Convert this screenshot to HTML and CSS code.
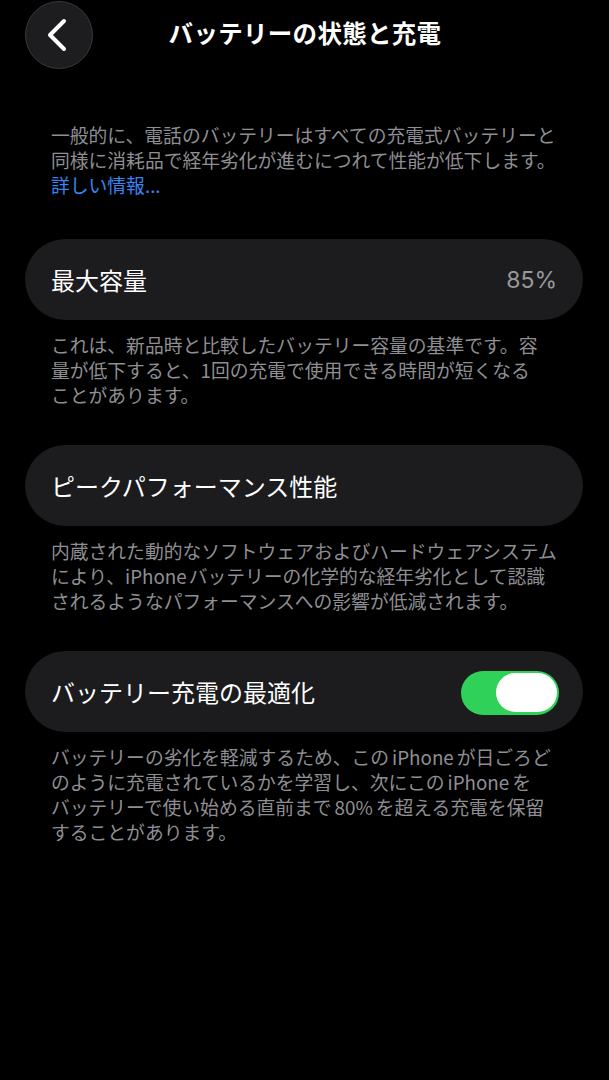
FILE: index.html
```html
<!DOCTYPE html>
<html lang="ja">
<head>
<meta charset="utf-8">
<title>バッテリーの状態と充電</title>
<link rel="stylesheet" href="styles.css">
</head>
<body>
<div class="screen">
  <header class="nav">
    <button class="back" aria-label="戻る">
      <svg width="24" height="34" viewBox="0 0 24 34"><path d="M19 3 L5 17 L19 31" fill="none" stroke="#fff" stroke-width="4" stroke-linecap="round" stroke-linejoin="round"/></svg>
    </button>
    <h1 class="title">バッテリーの状態と充電</h1>
  </header>

  <p class="intro">一般的に、電話のバッテリーはすべての充電式バッテリーと<br>同様に消耗品で経年劣化が進むにつれて性能が低下します。<br><span class="link">詳しい情報...</span></p>

  <section class="group first">
    <div class="card">
      <span class="label">最大容量</span>
      <span class="value">85%</span>
    </div>
    <p class="note">これは、新品時と比較したバッテリー容量の基準です。容<br>量が低下すると、1回の充電で使用できる時間が短くなる<br>ことがあります。</p>
  </section>

  <section class="group">
    <div class="card">
      <span class="label">ピークパフォーマンス性能</span>
    </div>
    <p class="note">内蔵された動的なソフトウェアおよびハードウェアシステム<br>により、<span class="latin-l">iPhone</span>バッテリーの化学的な経年劣化として認識<br>されるようなパフォーマンスへの影響が低減されます。</p>
  </section>

  <section class="group">
    <div class="card card-toggle">
      <span class="label">バッテリー充電の最適化</span>
      <span class="toggle"><span class="knob"></span></span>
    </div>
    <p class="note">バッテリーの劣化を軽減するため、この<span class="latin">iPhone</span>が日ごろど<br>のように充電されているかを学習し、次にこの<span class="latin">iPhone</span>を<br>バッテリーで使い始める直前まで<span class="latin">80%</span>を超える充電を保留<br>することがあります。</p>
  </section>
</div>
</body>
</html>
```
FILE: styles.css
```css
* { box-sizing: border-box; }
html, body {
  margin: 0;
  padding: 0;
  background: #000;
}
body {
  font-family: "Noto Sans CJK JP", "Noto Sans", sans-serif;
  color: #fff;
  width: 609px;
  height: 1080px;
  overflow: hidden;
}
.screen {
  display: flex;
  flex-direction: column;
  padding: 0 26px 0 25px;
}
.nav {
  display: flex;
  align-items: center;
  height: 70px;
}
.back {
  width: 68px;
  height: 68px;
  border-radius: 50%;
  background: #1d1d1f;
  border: 1px solid #38383b;
  display: flex;
  align-items: center;
  justify-content: center;
  padding: 0 4px 0 0;
  margin: 0;
  flex: none;
}
.title {
  flex: 1;
  margin: 0;
  padding-right: 66px;
  text-align: center;
  font-size: 24.5px;
  font-weight: 700;
  line-height: 66px;
  align-self: flex-start;
  letter-spacing: 0.3px;
}
.intro {
  margin: 52px 0 0 26px;
  font-size: 18.8px;
  line-height: 25px;
  color: #8e8e93;
  white-space: nowrap;
}
.link { color: #3a84f2; }
.group {
  display: flex;
  flex-direction: column;
  margin-top: 38px;
}
.group.first { margin-top: 42px; }
.card {
  height: 81px;
  border-radius: 41px;
  background: #1c1c1e;
  display: flex;
  align-items: center;
  justify-content: space-between;
  padding: 0 25px 0 26px;
}
.label {
  font-size: 24px;
  line-height: 30px;
  color: #fff;
}
.value {
  font-family: "Inter", "Noto Sans", sans-serif;
  font-size: 23px;
  font-weight: 400;
  color: #98989d;
  margin-right: 1px;
}
.card-toggle { padding-right: 24px; }
.toggle {
  width: 98px;
  height: 44px;
  border-radius: 22px;
  background: #30d158;
  display: flex;
  align-items: center;
  justify-content: flex-end;
  padding: 0 2px;
  margin-top: 2px;
}
.knob {
  width: 61px;
  height: 39px;
  border-radius: 20px;
  background: #fff;
}
.note {
  margin: 12px 0 0 26px;
  font-size: 18.8px;
  line-height: 25px;
  color: #8e8e93;
  white-space: nowrap;
}
.latin { margin: 0 3px; }
.latin-l { margin-right: 2px; }
```
